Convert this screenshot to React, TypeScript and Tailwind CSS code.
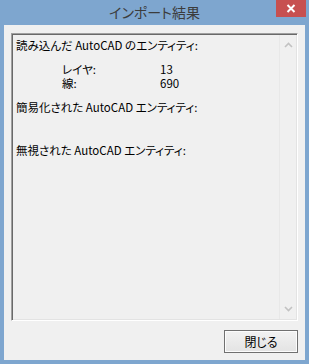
import React from 'react';

const font = "font-['Meiryo_UI','Noto_Sans_CJK_JP',sans-serif] [font-feature-settings:'palt']";

function Chevron({ up }: { up?: boolean }) {
  return (
    <svg width="9" height="6" viewBox="0 0 9 6" className="mx-auto">
      <path
        d={up ? 'M1 5 L4.5 1.5 L8 5' : 'M1 1 L4.5 4.5 L8 1'}
        fill="none"
        stroke="#c2c2c2"
        strokeWidth="1.6"
      />
    </svg>
  );
}

export default function App() {
  return (
    <div className={`w-[309px] h-[364px] bg-[#7ea6cf] flex flex-col ${font}`}>
      {/* title bar */}
      <div className="relative h-[25px] flex items-center justify-center">
        <span className="text-[14px] leading-none text-[#3c3c3c] pb-[2px]">インポート結果</span>
        <div className="absolute right-[3px] top-0 w-[30px] h-[17px] bg-[#c75050] flex items-center justify-center">
          <svg width="10" height="9" viewBox="0 0 10 9">
            <path d="M1.5 1 L8.5 8 M8.5 1 L1.5 8" stroke="#fff" strokeWidth="2" />
          </svg>
        </div>
      </div>

      {/* client area */}
      <div className="flex-1 mx-[4px] mb-[4px] bg-[#f0f0f0] flex flex-col px-[7px] pt-[8px] pb-[7px]">
        <div className="h-[288px] flex border-t border-l border-t-[#a0a0a0] border-l-[#a0a0a0] border-b border-r border-b-white border-r-white shadow-[inset_1px_1px_0_#696969,inset_-1px_-1px_0_#e3e3e3]">
          <div className="flex-1 pl-[4px] pt-[4px] text-[11.5px] leading-[14px] text-black">
            <div className="h-[14px]">読み込んだ AutoCAD のエンティティ:</div>
            <div className="mt-[10px] pl-[46px] grid grid-cols-[98px_auto]">
              <div className="h-[14px]">レイヤ:</div>
              <div className="h-[14px]">13</div>
              <div className="h-[14px]">線:</div>
              <div className="h-[14px]">690</div>
            </div>
            <div className="mt-[10px] h-[14px]">簡易化された AutoCAD エンティティ:</div>
            <div className="mt-[29px] h-[14px]">無視された AutoCAD エンティティ:</div>
          </div>
          <div className="w-[17px] mr-[1px] my-[1px] border-l border-l-[#e8e8e8] flex flex-col justify-between py-[7px]">
            <Chevron up />
            <Chevron />
          </div>
        </div>

        <div className="flex justify-end mt-[9px]">
          <button className="w-[74px] h-[23px] border border-[#707070] bg-gradient-to-b from-[#f2f2f2] to-[#e3e3e3] shadow-[inset_0_0_0_1px_#fcfcfc] text-[12px] text-black leading-none">
            閉じる
          </button>
        </div>
      </div>
    </div>
  );
}
